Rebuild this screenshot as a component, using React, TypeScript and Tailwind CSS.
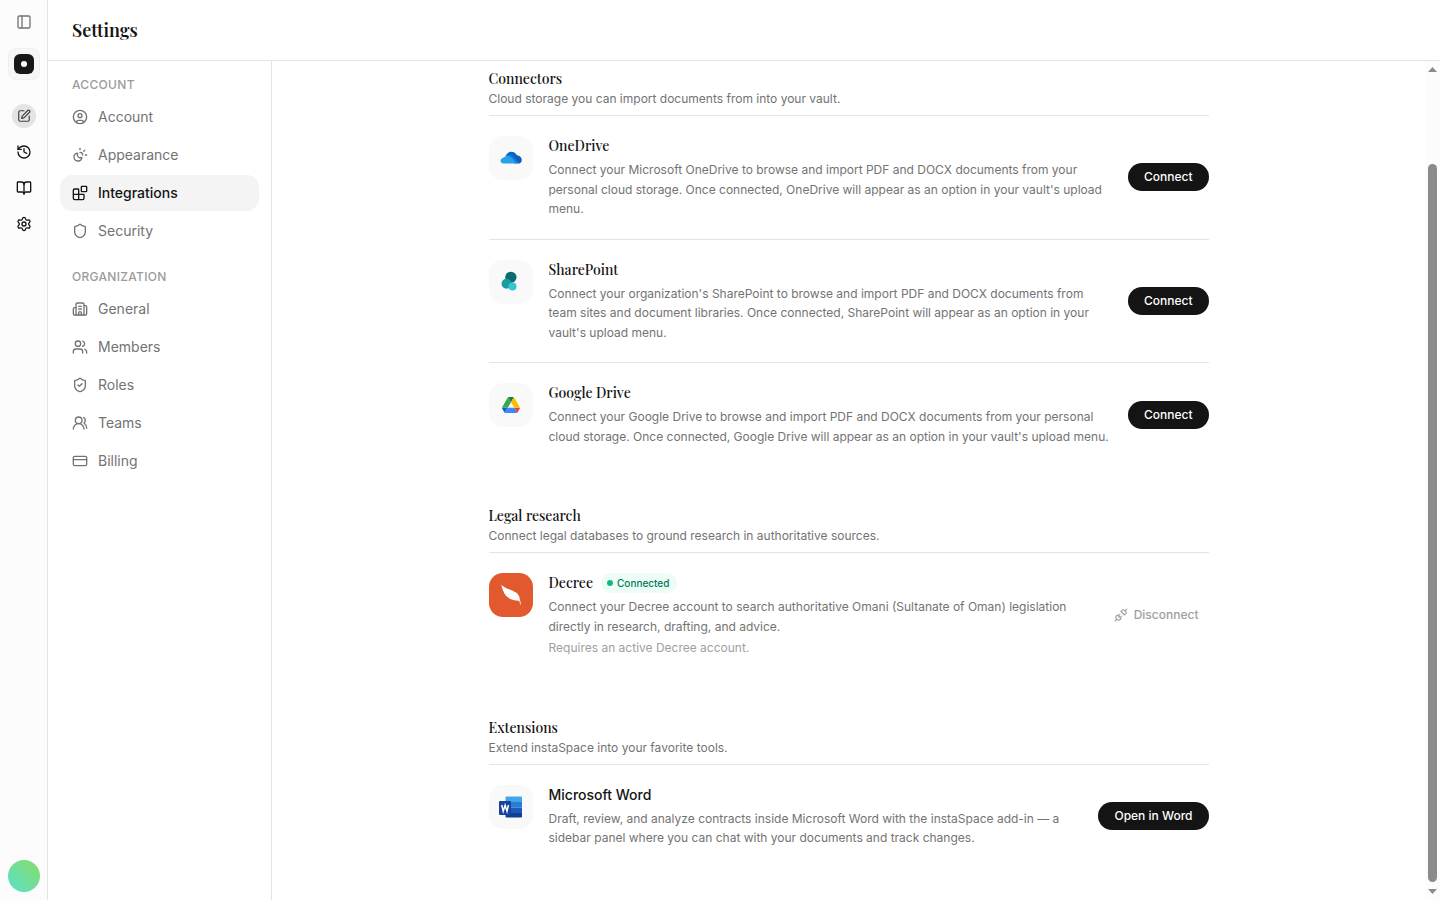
import type { ReactNode } from "react";
import {
  Blocks,
  BookOpen,
  Building2,
  CircleUser,
  CreditCard,
  History,
  PanelLeft,
  Settings,
  Shield,
  ShieldCheck,
  SquarePen,
  SunMoon,
  Unplug,
  Users,
  UsersRound,
  type LucideIcon,
} from "lucide-react";

const serif = "font-['Playfair_Display','Liberation_Serif',serif]";

type NavEntry = { label: string; icon: LucideIcon; active?: boolean };

const account: NavEntry[] = [
  { label: "Account", icon: CircleUser },
  { label: "Appearance", icon: SunMoon },
  { label: "Integrations", icon: Blocks, active: true },
  { label: "Security", icon: Shield },
];

const organization: NavEntry[] = [
  { label: "General", icon: Building2 },
  { label: "Members", icon: Users },
  { label: "Roles", icon: ShieldCheck },
  { label: "Teams", icon: UsersRound },
  { label: "Billing", icon: CreditCard },
];

function OneDriveLogo() {
  return (
    <svg width="22" height="22" viewBox="0 0 22 22" aria-hidden="true">
      <path d="M6 8.5C7 6.2 9 4.8 11.3 4.8c2.600 0 4.700 1.500 5.700 3.800l-3 4.400z" fill="#0a63c1" />
      <path d="M14.500 8.300c.8-.3 1.700-.3 2.500-.1 2.600.4 4.800 2.300 4.800 4.700 0 2.200-1.700 3.700-3.800 3.700h-4z" fill="#0f5cb8" />
      <path d="M5.500 9C8 6.800 11 7.200 14 9.500l5 6.500H9z" fill="#1177d3" />
      <path d="M4.900 16.600C2.500 16.600.5 15.900.5 13.900c0-1.900 1.700-2.800 3.300-3.400C5.500 9.100 8.600 8.500 11 10l5.600 6.600z" fill="#28a1e8" />
    </svg>
  );
}

function SharePointLogo() {
  return (
    <svg width="22" height="22" viewBox="0 0 22 22" aria-hidden="true">
      <circle cx="10.900" cy="6.300" r="5.600" fill="#0b6b70" />
      <circle cx="6.500" cy="12.800" r="5" fill="#1a9ba1" />
      <circle cx="12.500" cy="15.500" r="4" fill="#37c6d0" />
    </svg>
  );
}

function GoogleDriveLogo() {
  return (
    <svg width="18" height="16" viewBox="0 0 87.3 78" aria-hidden="true">
      <path d="m6.600 66.850 3.850 6.650c.8 1.400 1.950 2.500 3.300 3.300l13.750-23.800h-27.500c0 1.550.4 3.100 1.200 4.500z" fill="#0066da" />
      <path d="m43.650 25-13.750-23.800c-1.350.8-2.500 1.900-3.300 3.300l-25.400 44a9.060 9.060 0 0 0 -1.200 4.500h27.500z" fill="#34a853" />
      <path d="m73.550 76.800c1.350-.8 2.500-1.900 3.300-3.300l1.600-2.750 7.650-13.250c.8-1.400 1.200-2.950 1.200-4.500h-27.502l5.852 11.500z" fill="#ea4335" />
      <path d="m43.650 25 13.750-23.800c-1.350-.8-2.900-1.200-4.500-1.200h-18.500c-1.600 0-3.150.45-4.500 1.200z" fill="#188038" />
      <path d="m59.800 53h-32.300l-13.750 23.800c1.350.8 2.900 1.200 4.500 1.200h50.800c1.600 0 3.150-.45 4.500-1.200z" fill="#4285f4" />
      <path d="m73.400 26.500-12.700-22c-.8-1.400-1.950-2.500-3.300-3.300l-13.750 23.800 16.150 28h27.450c0-1.550-.4-3.100-1.200-4.500z" fill="#fbbc04" />
    </svg>
  );
}

function DecreeLogo() {
  return (
    <svg width="44" height="44" viewBox="0 0 44 44" aria-hidden="true">
      <path
        d="M12.300 12c2.400 2 5 3.200 7.700 4.200 2.600 1 5 1.900 7 3.400 2.300 1.700 3.500 3.900 3.700 6.400.6 1.600 1 3.500 1.100 5.600h-.7c-.1-1.500-.4-2.800-.9-3.900-2.900.2-5.700-.3-8.300-1.400-1.600-.7-3-1.700-3.900-2.900l-1.100-.5-.5-1.500-1.300-.9-.3-1.600c-1.200-2.100-1.700-4.100-2.500-6.900z"
        fill="#fff"
      />
    </svg>
  );
}

function WordLogo() {
  return (
    <svg width="24" height="22" viewBox="0 0 24 22" aria-hidden="true">
      <path d="M7.500.5H22a1 1 0 0 1 1 1V6H6.500V1.500a1 1 0 0 1 1-1z" fill="#41a5ee" />
      <path d="M6.500 6H23v5.500H6.500z" fill="#2b7cd3" />
      <path d="M6.500 11.500H23V17H6.500z" fill="#185abd" />
      <path d="M6.500 17H23v3.500a1 1 0 0 1-1 1H7.500a1 1 0 0 1-1-1z" fill="#103f91" />
      <rect x="0" y="5" width="12" height="14" rx="1" fill="#17449b" />
      <path d="m2.700 9 1.500 6.200L6.100 9.200l1.900 6L9.500 9" stroke="#fff" strokeWidth="1.500" fill="none" />
    </svg>
  );
}

function NavGroup({ title, entries }: { title: string; entries: NavEntry[] }) {
  return (
    <section>
      <h2 className="px-3 pb-1.5 text-[12px] leading-4 font-medium tracking-wide text-[#9b9b9b] uppercase">{title}</h2>
      <ul className="flex flex-col gap-0.5">
        {entries.map(({ label, icon: Icon, active }) => (
          <li key={label}>
            <a
              href="#"
              aria-current={active ? "page" : undefined}
              className={
                active
                  ? "flex h-9 items-center gap-2.5 rounded-xl bg-[#f4f4f4] px-3 text-[14px] leading-5 font-medium text-[#141414]"
                  : "flex h-9 items-center gap-2.5 rounded-xl px-3 text-[14px] leading-5 text-[#737373]"
              }
            >
              <Icon size={16} strokeWidth={2} />
              {label}
            </a>
          </li>
        ))}
      </ul>
    </section>
  );
}

function Section({ title, subtitle, children }: { title: string; subtitle: string; children: ReactNode }) {
  return (
    <section>
      <header className="border-b border-[#e4e4e4] pb-2">
        <h2 className={`${serif} text-[14px] leading-5 font-medium text-[#141414]`}>{title}</h2>
        <p className="mt-0.5 text-[12px] leading-4 text-[#737373]">{subtitle}</p>
      </header>
      <ul className="divide-y divide-[#e4e4e4]">{children}</ul>
    </section>
  );
}

type RowProps = {
  name: string;
  sans?: boolean;
  logo: ReactNode;
  tile?: string;
  text: string;
  note?: string;
  connected?: boolean;
  action: ReactNode;
};

function Row({ name, sans, logo, tile = "bg-[#f9f9f9]", text, note, connected, action }: RowProps) {
  return (
    <li className="flex items-center gap-4 py-5">
      <div className={`${tile} flex size-11 shrink-0 items-center justify-center self-start rounded-[14px]`}>{logo}</div>
      <div className="min-w-0 flex-1">
        <div className="flex h-5 items-center gap-2">
          <h3 className={`${sans ? "" : serif} text-[14px] leading-5 font-medium text-[#141414]`}>{name}</h3>
          {connected && (
            <span className="flex items-center gap-1 rounded-full bg-[#ecfdf5] py-0.5 pr-2 pl-1.5 text-[10px] leading-4 font-medium text-[#04785a]">
              <span className="size-1.5 rounded-full bg-[#10b981]" />
              Connected
            </span>
          )}
        </div>
        <p className="mt-1 text-[12px] leading-relaxed text-[#737373]">{text}</p>
        {note && <p className="mt-0.5 text-[12px] leading-relaxed text-[#a0a0a0]">{note}</p>}
      </div>
      {action}
    </li>
  );
}

function PillButton({ children }: { children: ReactNode }) {
  return (
    <button type="button" className="h-7 shrink-0 rounded-full bg-[#141414] px-4 text-[12px] leading-4 font-medium text-white">
      {children}
    </button>
  );
}

function Rail() {
  return (
    <aside className="flex w-12 shrink-0 flex-col items-center border-r border-[#e4e4e4] bg-[#fcfcfc] pt-2.5 pb-2 text-[#141414]">
      <button type="button" aria-label="Toggle sidebar" className="flex size-6 items-center justify-center text-[#737373]">
        <PanelLeft size={16} strokeWidth={2} />
      </button>
      <button
        type="button"
        aria-label="Workspace"
        className="mt-3.5 flex size-8 items-center justify-center rounded-lg border border-[#f0f0f0] bg-[#f6f6f6]"
      >
        <span className="flex size-5 items-center justify-center rounded-md bg-[#171717]">
          <span className="size-1.5 rounded-full bg-white" />
        </span>
      </button>
      <nav aria-label="Main" className="mt-6 flex flex-col items-center gap-3">
        <button type="button" aria-label="New" className="flex size-6 items-center justify-center rounded-full bg-[#e4e4e4] text-[#404040]">
          <SquarePen size={14} strokeWidth={2} />
        </button>
        <a href="#" aria-label="History" className="flex size-6 items-center justify-center">
          <History size={16} strokeWidth={2} />
        </a>
        <a href="#" aria-label="Library" className="flex size-6 items-center justify-center">
          <BookOpen size={16} strokeWidth={2} />
        </a>
        <a href="#" aria-label="Settings" className="flex size-6 items-center justify-center">
          <Settings size={16} strokeWidth={2} />
        </a>
      </nav>
      <button
        type="button"
        aria-label="Profile"
        className="mt-auto size-8 rounded-full bg-linear-to-tr from-[#58dfc8] to-[#86dc62]"
      />
    </aside>
  );
}

function Scrollbar() {
  return (
    <div aria-hidden="true" className="flex w-[15px] shrink-0 flex-col items-center bg-[#fcfcfc]">
      <svg width="9" height="5" viewBox="0 0 9 5" className="mt-1.5 shrink-0">
        <path d="M0 5 4.500 0 9 5z" fill="#8b8b8b" />
      </svg>
      <div className="mt-[92px] mb-[7px] w-[9px] flex-1 rounded-full bg-[#8b8b8b]" />
      <svg width="9" height="5" viewBox="0 0 9 5" className="mb-1.5 shrink-0">
        <path d="M0 0 4.500 5 9 0z" fill="#8b8b8b" />
      </svg>
    </div>
  );
}

export default function App() {
  return (
    <div className="flex h-screen bg-white font-['Inter',sans-serif] text-[#141414] antialiased">
      <Rail />
      <div className="flex min-w-0 flex-1 flex-col">
        <header className="flex h-[61px] shrink-0 items-center border-b border-[#e4e4e4] px-6">
          <h1 className={`${serif} text-[18px] leading-7 font-semibold`}>Settings</h1>
        </header>
        <div className="flex min-h-0 flex-1">
          <nav aria-label="Settings" className="flex w-56 shrink-0 flex-col gap-5 border-r border-[#e4e4e4] px-3 pt-4">
            <NavGroup title="Account" entries={account} />
            <NavGroup title="Organization" entries={organization} />
          </nav>
          <main className="min-w-0 flex-1 overflow-hidden px-6 pt-2">
            <div className="mx-auto flex max-w-[720px] flex-col gap-10">
              <Section title="Connectors" subtitle="Cloud storage you can import documents from into your vault.">
                <Row
                  name="OneDrive"
                  logo={<OneDriveLogo />}
                  text="Connect your Microsoft OneDrive to browse and import PDF and DOCX documents from your personal cloud storage. Once connected, OneDrive will appear as an option in your vault's upload menu."
                  action={<PillButton>Connect</PillButton>}
                />
                <Row
                  name="SharePoint"
                  logo={<SharePointLogo />}
                  text="Connect your organization's SharePoint to browse and import PDF and DOCX documents from team sites and document libraries. Once connected, SharePoint will appear as an option in your vault's upload menu."
                  action={<PillButton>Connect</PillButton>}
                />
                <Row
                  name="Google Drive"
                  logo={<GoogleDriveLogo />}
                  text="Connect your Google Drive to browse and import PDF and DOCX documents from your personal cloud storage. Once connected, Google Drive will appear as an option in your vault's upload menu."
                  action={<PillButton>Connect</PillButton>}
                />
              </Section>
              <Section title="Legal research" subtitle="Connect legal databases to ground research in authoritative sources.">
                <Row
                  name="Decree"
                  connected
                  tile="bg-[#e25930]"
                  logo={<DecreeLogo />}
                  text="Connect your Decree account to search authoritative Omani (Sultanate of Oman) legislation directly in research, drafting, and advice."
                  note="Requires an active Decree account."
                  action={
                    <button type="button" className="flex h-7 shrink-0 items-center gap-1.5 px-2.5 text-[12px] leading-4 font-medium text-[#a0a0a0]">
                      <Unplug size={14} strokeWidth={2} />
                      Disconnect
                    </button>
                  }
                />
              </Section>
              <Section title="Extensions" subtitle="Extend instaSpace into your favorite tools.">
                <Row
                  name="Microsoft Word"
                  sans
                  logo={<WordLogo />}
                  text="Draft, review, and analyze contracts inside Microsoft Word with the instaSpace add-in — a sidebar panel where you can chat with your documents and track changes."
                  action={<PillButton>Open in Word</PillButton>}
                />
              </Section>
            </div>
          </main>
          <Scrollbar />
        </div>
      </div>
    </div>
  );
}
